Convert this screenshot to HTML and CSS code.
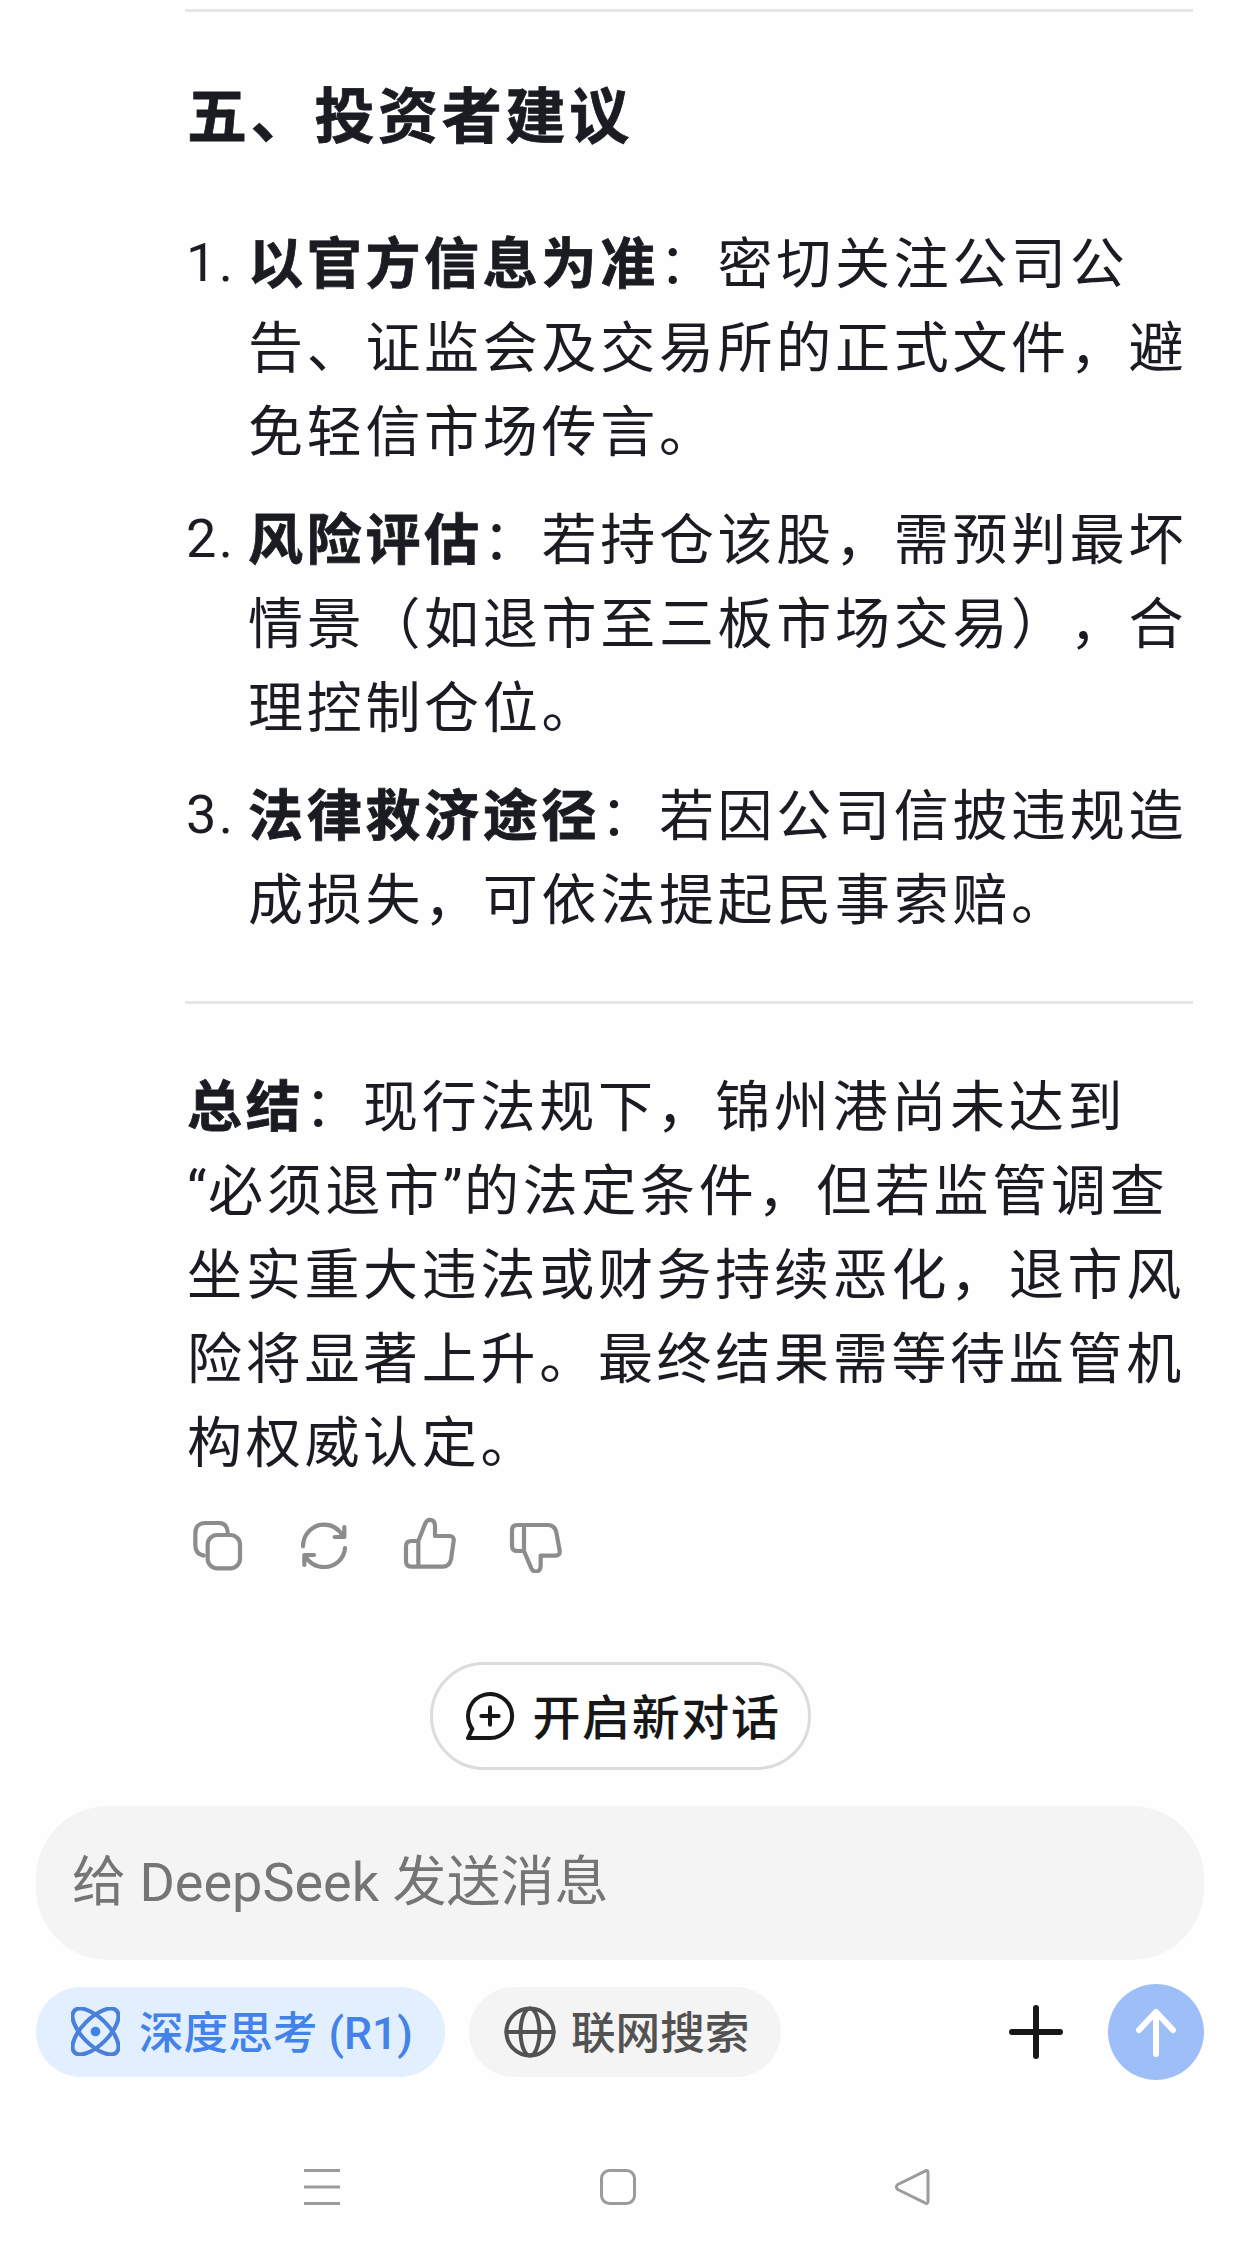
FILE: index.html
```html
<!DOCTYPE html>
<html lang="zh-CN">
<head>
<meta charset="utf-8">
<title>DeepSeek</title>
<link rel="stylesheet" href="styles.css">
</head>
<body>
<main class="answer">
  <hr class="rule">
  <h2 class="heading">五、投资者建议</h2>
  <ol class="tips">
    <li class="tip"><span class="num">1.</span><p><b>以官方信息为准</b>：密切关注公司公<br>告、证监会及交易所的正式文件，避<br>免轻信市场传言。</p></li>
    <li class="tip"><span class="num">2.</span><p><b>风险评估</b>：若持仓该股，需预判最坏<br>情景（如退市至三板市场交易），合<br>理控制仓位。</p></li>
    <li class="tip"><span class="num">3.</span><p><b>法律救济途径</b>：若因公司信披违规造<br>成损失，可依法提起民事索赔。</p></li>
  </ol>
  <hr class="rule">
  <p class="summary"><b>总结</b>：现行法规下，锦州港尚未达到<br><span class="quote">“</span>必须退市<span class="quote">”</span>的法定条件，但若监管调查<br>坐实重大违法或财务持续恶化，退市风<br>险将显著上升。最终结果需等待监管机<br>构权威认定。</p>
  <div class="actions">
    <svg class="action" viewBox="60 80 168 168">
      <rect x="113" y="134" width="97" height="100" rx="29"/>
      <path d="M173 124C171 107 161 98 147 98H106C87 98 76 110 76 128V164C76 182 85 193 101 196"/>
    </svg>
    <svg class="action" viewBox="378 80 168 168">
      <path d="M399 168C399 132 427 103 462 103C488 103 508 117 520 139M523 110V140H494"/>
      <path d="M525 173C523 205 496 230 463 230C438 230 417 217 405 196M403 224V194H432"/>
    </svg>
    <svg class="action" viewBox="696 80 168 168">
      <path d="M745 152H724Q708 152 708 168V213Q708 229 724 229H818C832 229 840 221 843 207L851 152Q853 137 838 137H795V108C795 84 773 84 766 99L745 152V229"/>
    </svg>
    <svg class="action" viewBox="1014 80 168 168">
      <path d="M1062 182H1042Q1026 182 1026 166V120Q1026 104 1042 104H1132C1147 104 1156 112 1159 126L1169 181Q1171 196 1156 196H1112V225C1112 248 1091 248 1084 234L1062 182V104"/>
    </svg>
  </div>
</main>

<footer class="composer">
  <button class="new-chat">
    <svg class="new-icon" viewBox="0 0 144 144">
      <path d="M6 138H72A66 66 0 1 0 12 99Q16 107 19 111Z"/>
      <path d="M72 46V98M46 72H98"/>
    </svg>
    <span>开启新对话</span>
  </button>
  <div class="input">给 DeepSeek 发送消息</div>
  <div class="tools">
    <button class="chip chip-on">
      <svg class="chip-icon" viewBox="0 0 48 48">
        <ellipse cx="24" cy="24" rx="29" ry="13" transform="rotate(45 24 24)"/>
        <ellipse cx="24" cy="24" rx="29" ry="13" transform="rotate(-45 24 24)"/>
        <circle class="dot" cx="24" cy="24" r="4.7"/>
      </svg>
      <span>深度思考 (R1)</span>
    </button>
    <button class="chip">
      <svg class="chip-icon globe" viewBox="0 0 52 52">
        <circle cx="26" cy="26" r="23.6"/>
        <ellipse cx="26" cy="26" rx="9.4" ry="23.6"/>
        <path d="M2.4 26H49.6"/>
      </svg>
      <span>联网搜索</span>
    </button>
    <svg class="plus" viewBox="0 0 56 56"><path d="M28 4V52M4 28H52"/></svg>
    <button class="send"><svg viewBox="0 0 96 96"><path d="M48 70V28M31 46L48 28L65 46"/></svg></button>
  </div>
</footer>

<nav class="system">
  <svg viewBox="0 0 38 38"><path d="M1 2.5H37M1 19H37M1 35.5H37"/></svg>
  <svg viewBox="0 0 38 38"><rect x="2.5" y="2.5" width="33" height="33" rx="8"/></svg>
  <svg viewBox="0 0 38 38"><path d="M29.500 3.300Q33 1.200 33 5V33Q33 36.800 29.500 34.700L2.800 21.500Q0 19 2.800 16.500Z"/></svg>
</nav>
</body>
</html>
```
FILE: styles.css
```css
* { box-sizing: border-box; }

body {
  margin: 0;
  width: 1240px;
  height: 2253px;
  overflow: hidden;
  display: flex;
  flex-direction: column;
  background: #fefefe;
  color: #1a1c22;
  font-family: Roboto, "Noto Sans CJK SC", sans-serif;
  text-spacing-trim: space-all;
  white-space: nowrap;
}

h2, p, ol { margin: 0; padding: 0; }
svg { display: block; flex: none; fill: none; stroke-linecap: round; stroke-linejoin: round; }
button { border: 0; padding: 0; font: inherit; color: inherit; white-space: nowrap; }
b { font-weight: 700; -webkit-text-stroke: 0.8px currentColor; }

.answer {
  height: 1662px;
  padding: 9px 47px 0 185px;
  font-size: 55px;
  line-height: 84px;
  letter-spacing: 3.7px;
}

.rule { height: 3px; margin: 0; border: 0; background: #e6e6e6; }

.heading {
  padding: 64px 0 61px 2px;
  font-size: 60px;
  line-height: 84px;
  letter-spacing: 3.7px;
  -webkit-text-stroke: 0.8px currentColor;
}

.tips { display: flex; flex-direction: column; gap: 24px; list-style: none; height: 780px; }
.tip { display: flex; }
.tip p { padding-top: 1px; margin-bottom: -1px; }
.num { width: 63px; padding-left: 1px; font-size: 54px; letter-spacing: 2.300px; }

.summary { padding: 61px 0 0 2px; }
.quote { letter-spacing: 1.500px; }

.actions { display: flex; gap: 50px; padding: 32px 0 0 5px; }
.action { width: 56px; height: 56px; stroke: #8c8c8c; stroke-width: 12.500px; }

.composer { padding: 0 36px; display: flex; flex-direction: column; }

.new-chat {
  align-self: center;
  width: 381px;
  height: 108px;
  padding-left: 33px;
  display: flex;
  align-items: center;
  gap: 19px;
  border: 3px solid #dcdcdc;
  border-radius: 54px;
  background: #fefefe;
  color: #171717;
  font-size: 48px;
  font-weight: 500;
  letter-spacing: 1.600px;
}
.new-chat span { padding-bottom: 5px; }
.new-icon { width: 48px; height: 48px; stroke: #171717; stroke-width: 12px; overflow: visible; }

.input {
  margin-top: 36px;
  height: 154px;
  padding-left: 36px;
  border-radius: 72px;
  background: #f4f4f4;
  color: #757575;
  font-size: 54px;
  line-height: 154px;
}

.tools { display: flex; align-items: center; height: 97px; margin-top: 23px; }
.chip {
  width: 312px;
  height: 90px;
  padding-left: 35px;
  display: flex;
  align-items: center;
  gap: 15px;
  border-radius: 45px;
  background: #f4f4f4;
  color: #525252;
  font-size: 44.600px;
  font-weight: 500;
}
.chip span { padding-bottom: 5px; }
.chip-on { width: 409px; margin-right: 24px; gap: 19px; background: #e2effe; color: #4382e8; }
.chip-icon { width: 49px; height: 49px; stroke: #4a80dc; stroke-width: 4px; }
.chip-icon .dot { fill: #4080ec; stroke: none; }
.globe { width: 52px; height: 52px; stroke: #525252; }
.plus { width: 56px; height: 56px; margin: 0 44px 0 auto; stroke: #171717; stroke-width: 6px; }
.send { width: 96px; height: 96px; border-radius: 50%; background: #9ebef8; }
.send svg { width: 96px; height: 96px; stroke: #fff; stroke-width: 6px; }

.system { display: flex; gap: 258px; padding: 88px 0 0 303px; }
.system svg { width: 38px; height: 38px; stroke: #9b9b9b; stroke-width: 3px; stroke-linecap: butt; }
```
